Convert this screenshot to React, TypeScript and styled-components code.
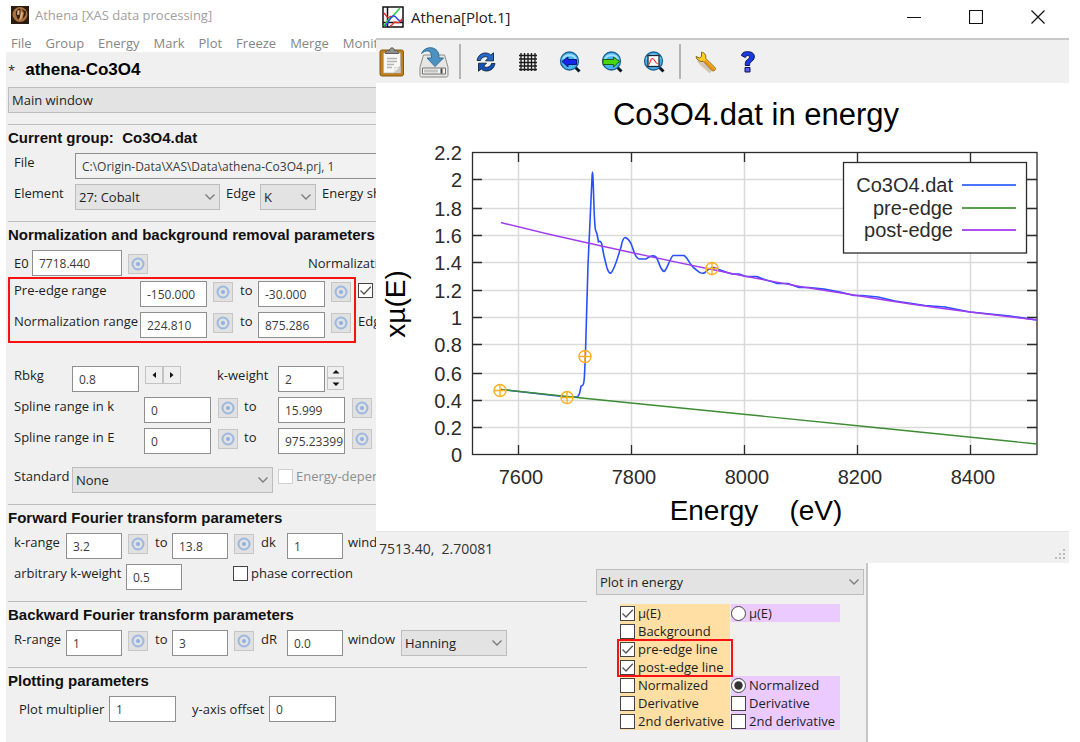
import React from "react";
import styled, { createGlobalStyle, css } from "styled-components";

const GlobalStyle = createGlobalStyle`
  *, *::before, *::after { box-sizing: border-box; }
  body {
    margin: 0;
    background: #ffffff;
    color: #1e1e1e;
    font-family: "Open Sans", "Noto Sans", sans-serif;
    font-size: 13px;
    line-height: 18px;
  }
  input, select, button { font: inherit; color: inherit; margin: 0; }
`;

/* ---------- shared form parts ---------- */

const Label = styled.label`
  white-space: nowrap;
  line-height: 18px;
`;

const Field = styled.input<{ $w?: number }>`
  width: ${(p) => (p.$w ? `${p.$w}px` : "100%")};
  height: 26px;
  padding: 0 0 0 6px;
  border: 1px solid #8f8f8f;
  border-radius: 0;
  background: #ffffff;
  color: #3c3c3c;
  font-size: 12px;
  outline: none;
  &:read-only { background: #f2f2f2; }
`;

const SelectBox = styled.span<{ $w?: number }>`
  display: grid;
  width: ${(p) => (p.$w ? `${p.$w}px` : "100%")};
  align-items: center;
  & > * { grid-area: 1 / 1; }
  & > svg { justify-self: end; margin-right: 4px; pointer-events: none; }
`;

const NativeSelect = styled.select`
  appearance: none;
  width: 100%;
  height: 26px;
  padding: 0 20px 0 3px;
  border: 1px solid #bdbdbd;
  border-radius: 0;
  background: #e3e3e3;
  outline: none;
`;

type SelectProps = { id: string; w?: number; options: string[]; label?: string };

function Select({ id, w, options, label }: SelectProps) {
  return (
    <SelectBox $w={w}>
      <NativeSelect id={id} aria-label={label} defaultValue={options[0]}>
        {options.map((o) => (
          <option key={o}>{o}</option>
        ))}
      </NativeSelect>
      <svg width="12" height="8" viewBox="0 0 12 8" fill="none" stroke="#7c7c7c" strokeWidth="1.4">
        <path d="M1.5 1.5 6 6l4.500-4.500" />
      </svg>
    </SelectBox>
  );
}

const CheckLabel = styled.label<{ $muted?: boolean }>`
  display: flex;
  align-items: center;
  gap: 3px;
  height: 18px;
  white-space: nowrap;
  color: ${(p) => (p.$muted ? "#8f8f8f" : "inherit")};
`;

const CheckSlot = styled.span`
  display: grid;
  & > * { grid-area: 1 / 1; }
  & > svg { visibility: hidden; pointer-events: none; }
  & > input:checked + svg { visibility: visible; }
`;

const CheckInput = styled.input<{ $muted?: boolean }>`
  appearance: none;
  width: 15px;
  height: 15px;
  background: #ffffff;
  border: 1px solid ${(p) => (p.$muted ? "#d0d0d0" : "#444444")};
  border-radius: ${(p) => (p.type === "radio" ? "50%" : "0")};
`;

type CheckProps = { text?: string; checked?: boolean; radio?: boolean; muted?: boolean; label?: string };

function Check({ text, checked, radio, muted, label }: CheckProps) {
  return (
    <CheckLabel $muted={muted}>
      <CheckSlot>
        <CheckInput
          type={radio ? "radio" : "checkbox"}
          name={radio ? "plot-single" : undefined}
          defaultChecked={checked}
          disabled={muted}
          $muted={muted}
          aria-label={label}
        />
        <svg width="15" height="15" viewBox="0 0 15 15">
          {radio ? (
            <circle cx="7.5" cy="7.5" r="4.200" fill="#333333" />
          ) : (
            <path d="M2.500 7.500 6 11l6.800-7.200" fill="none" stroke="#555555" strokeWidth="1.300" />
          )}
        </svg>
      </CheckSlot>
      {text}
    </CheckLabel>
  );
}

const TargetButton = styled.button`
  display: flex;
  align-items: center;
  justify-content: center;
  width: 20px;
  height: 20px;
  margin-top: 1px;
  padding: 0;
  border: 1px solid #c6c6c6;
  background: #e1e1e1;
`;

function Target({ name }: { name: string }) {
  return (
    <TargetButton type="button" aria-label={`Pluck ${name}`}>
      <svg width="14" height="14" viewBox="0 0 14 14" fill="none">
        <circle cx="7" cy="7" r="5.500" stroke="#9db8e0" strokeWidth="2" />
        <circle cx="7" cy="7" r="2" fill="#8fb0e2" />
      </svg>
    </TargetButton>
  );
}

/* ---------- main window ---------- */

const Desktop = styled.div`
  position: relative;
  min-height: 100vh;
`;

const MainWindow = styled.main`
  display: flex;
  flex-direction: column;
  width: calc(100% - 212px);
  min-height: 100vh;
`;

const MainTitle = styled.header`
  display: flex;
  align-items: center;
  gap: 6px;
  height: 29px;
  padding-left: 11px;
  color: #a0a0a0;
`;

const MenuBar = styled.nav`
  display: flex;
  align-items: center;
  gap: 14px;
  height: 23px;
  padding: 4px 0 0 11px;
`;

const MenuItem = styled.button`
  padding: 0;
  border: 0;
  background: none;
  color: #858585;
`;

const Panel = styled.div`
  display: grid;
  flex: 1;
  grid-template-columns: minmax(0, 1fr) 268px;
  column-gap: 9px;
  margin-left: 6px;
  padding: 0 2px 20px;
  background: #f0f0f0;
  border-right: 2px solid #c6c6c6;
`;

const Parameters = styled.div`
  display: flex;
  flex-direction: column;
`;

const ProjectRow = styled.div`
  display: flex;
  align-items: center;
  gap: 10px;
  height: 35px;
`;

const ProjectName = styled.h1`
  margin: 0;
  color: #000000;
  font: bold 17px/20px "Liberation Sans", sans-serif;
`;

const Section = styled.section`
  padding-bottom: 11px;
  border-top: 1px solid #bdbdbd;
  ${ProjectRow} + * + & { margin-top: 11px; }
`;

const Heading = styled.h2`
  margin: 4px 0 6px;
  color: #111111;
  font: bold 15px/18px "Liberation Sans", sans-serif;
  white-space: pre;
`;

const Row = styled.div<{ $cols: string; $top?: number; $center?: boolean; $inset?: number }>`
  display: grid;
  grid-template-columns: ${(p) => p.$cols};
  align-items: ${(p) => (p.$center ? "center" : "start")};
  min-height: 26px;
  margin-top: ${(p) => p.$top ?? 5}px;
  padding-left: ${(p) => p.$inset ?? 6}px;
`;

const RangeGroup = styled.div`
  display: flex;
  gap: 2px;
  margin-top: 1px;
`;

const redFrame = css`border: 2px solid #fa1212;`;

const RangeFrame = styled.div`
  display: grid;
  gap: 5px;
  padding: 2px 0 3px;
  ${redFrame}
`;

const RangeSide = styled.div`
  display: grid;
  align-content: start;
  gap: 13px;
  padding-top: 4px;
`;

const StepPair = styled.span<{ $vertical?: boolean }>`
  display: flex;
  flex-direction: ${(p) => (p.$vertical ? "column" : "row")};
`;

const StepButton = styled.button<{ $vertical?: boolean }>`
  display: flex;
  align-items: center;
  justify-content: center;
  width: ${(p) => (p.$vertical ? 17 : 18)}px;
  height: ${(p) => (p.$vertical ? 12 : 18)}px;
  padding: 0;
  border: 1px solid #c3c3c3;
  background: #efefef;
`;

const arrows = {
  left: "M6 1v6L2.500 4z",
  right: "M2 1v6l3.500-3z",
  up: "M4 2l3.500 3.500h-7z",
  down: "M4 6 .5 2.500h7z",
};

function Step({ dir, vertical }: { dir: keyof typeof arrows; vertical?: boolean }) {
  return (
    <StepButton type="button" $vertical={vertical} aria-label={`Step ${dir}`}>
      <svg width="8" height="8" viewBox="0 0 8 8" fill="#111111">
        <path d={arrows[dir]} />
      </svg>
    </StepButton>
  );
}

type RangeProps = { id: string; label: string; from: string; to: string; cols: string; inset?: number; top?: number };

function RangeRow({ id, label, from, to, cols, inset, top }: RangeProps) {
  return (
    <Row $cols={cols} $inset={inset} $top={top}>
      <Label htmlFor={`${id}-from`}>{label}</Label>
      <Field id={`${id}-from`} $w={67} defaultValue={from} />
      <Target name={`${label} start`} />
      <Label htmlFor={`${id}-to`}>to</Label>
      <Field id={`${id}-to`} $w={67} defaultValue={to} />
      <Target name={`${label} end`} />
    </Row>
  );
}

type FourierProps = {
  id: string;
  label: string;
  from: string;
  to: string;
  step: string;
  stepValue: string;
  windowLabel: string;
};

function FourierRow({ id, label, from, to, step, stepValue, windowLabel }: FourierProps) {
  return (
    <Row $cols="52px 62px 27px 17px 62px 27px 26px 61px 53px auto">
      <Label htmlFor={`${id}-from`}>{label}</Label>
      <Field id={`${id}-from`} $w={56} defaultValue={from} />
      <Target name={`${label} start`} />
      <Label htmlFor={`${id}-to`}>to</Label>
      <Field id={`${id}-to`} $w={56} defaultValue={to} />
      <Target name={`${label} end`} />
      <Label htmlFor={`${id}-step`}>{step}</Label>
      <Field id={`${id}-step`} $w={56} defaultValue={stepValue} />
      <Label htmlFor={`${id}-window`}>{windowLabel}</Label>
      <Select id={`${id}-window`} w={106} options={["Hanning"]} />
    </Row>
  );
}

/* ---------- plot options ---------- */

const PlotOptions = styled.aside`
  padding-top: 517px;
`;

const OptionColumns = styled.div`
  display: grid;
  grid-template-columns: 110px 109px;
  column-gap: 1px;
  margin: 9px 0 0 24px;
`;

const OptionList = styled.div<{ $tone: string }>`
  display: grid;
  grid-auto-rows: 18px;
  & > * { background: ${(p) => p.$tone}; }
`;

const Spacer = styled.div`
  && { background: none; }
  grid-row: span 3;
`;

const FramedOptions = styled.div`
  position: relative;
  grid-row: span 2;
  &::after {
    content: "";
    position: absolute;
    inset: -1px -3px;
    z-index: 1;
    pointer-events: none;
    ${redFrame}
  }
`;

/* ---------- plot window ---------- */

const PlotWindow = styled.section`
  position: absolute;
  top: 0;
  left: 376px;
  right: 11px;
  background: #ffffff;
`;

const PlotTitle = styled.header`
  display: flex;
  align-items: center;
  height: 38px;
  padding: 0 18px 4px 6px;
`;

const PlotName = styled.h2`
  flex: 1;
  margin: 0 0 0 7px;
  color: #222222;
  font-size: 15px;
  font-weight: 400;
  line-height: 20px;
`;

const WindowButton = styled.button`
  display: flex;
  align-items: center;
  justify-content: center;
  width: 62px;
  height: 26px;
  padding: 0;
  border: 0;
  background: none;
  &:last-child { width: 26px; margin-left: 18px; }
`;

const ToolBar = styled.div`
  display: flex;
  align-items: center;
  gap: 10px;
  height: 45px;
  border-top: 2px solid #c9c9c9;
  background: #f0f0f0;
`;

const ToolButton = styled.button`
  display: flex;
  align-items: center;
  justify-content: center;
  width: 32px;
  height: 34px;
  padding: 0;
  border: 0;
  background: none;
`;

const ToolDivider = styled.span`
  width: 2px;
  height: 35px;
  margin: 0 -1px;
  background: #b4b4b4;
`;

const Chart = styled.svg`
  display: block;
  width: 100%;
  height: 448px;
  font-family: "Liberation Sans", sans-serif;
`;

const StatusBar = styled.footer`
  display: flex;
  align-items: center;
  justify-content: space-between;
  height: 32px;
  padding: 3px 3px 0;
  border-top: 1px solid #e4e4e4;
  background: #f0f0f0;
  color: #333333;
  font-size: 14px;
  white-space: pre;
  & > svg { align-self: flex-end; }
`;

const outline = "#10243c";

function Lens({ children }: { children: React.ReactNode }) {
  return (
    <svg width="22" height="22" viewBox="0 0 22 22">
      <path d="m16 16 4.500 4.500" stroke="#0b1826" strokeWidth="3" />
      <circle cx="10.500" cy="10" r="9" fill="#48b4f0" stroke="#1d5f93" strokeWidth="1.300" />
      <path d="M4 8a7 6 0 0 1 13 0" fill="none" stroke="#a8e0ff" strokeWidth="2" />
      {children}
    </svg>
  );
}

const tools: Record<string, React.ReactNode> = {
  Copy: (
    <svg width="26" height="30" viewBox="0 0 26 30">
      <rect x="1" y="3" width="23.500" height="26" rx="2" fill="#c07f1c" stroke="#8a5a10" />
      <path d="M4.500 6h17v20h-17z" fill="#f7f7f5" stroke="#a9a9a0" strokeWidth=".6" />
      <path d="M21.500 19v7h-6z" fill="#c9c9c4" />
      <path d="M15.500 26c1-2 .6-4 0-5.500 2 .8 4.500.5 6-1.500z" fill="#ffffff" stroke="#b5b5b0" strokeWidth=".6" />
      <path d="M6.500 6.500c0-3 2-3 4-3 0-3.500 5-3.500 5 0 2 0 4 0 4 3z" fill="#8e908b" stroke="#5c5e5a" />
      <path d="M8 11.500h10M8 14.500h10M8 17.500h7M8 20.500h5" stroke="#b4b4b4" strokeWidth="1.300" />
    </svg>
  ),
  Save: (
    <svg width="30" height="32" viewBox="0 0 30 32">
      <path d="M4.500 9h21L29 21v8.500c0 .8-.6 1.500-1.500 1.500h-25C1.600 31 1 30.300 1 29.500V21z" fill="#e6e6e4" stroke="#8b8d88" />
      <path d="M3.500 22h23v6h-23z" fill="#f5f5f5" stroke="#70726e" />
      <path d="M5 25h14" stroke="#c4c4c4" strokeWidth="3" />
      <path d="M22.500 22.500v5" stroke="#444444" strokeWidth="2" />
      <path d="M2.500 7.500C5 1.500 12 .5 16 3c3.500 2 4 5 4 9h4.500L16 20.500 8 12h4.500c0-4-.8-6.500-3.500-7-2.500-.4-4.500.8-6.500 2.500z" fill="#4b92c0" stroke="#336f99" />
    </svg>
  ),
  Replot: (
    <svg width="20" height="20" viewBox="0 0 20 20" stroke={outline} strokeWidth=".9">
      <path d="M1 8.500C2 3.500 5.500 1 9.500 1c2.400 0 4 .8 5.200 2L17.500.8v8h-8L12.300 6C11 4.800 9.800 4.500 8.500 4.800 6.500 5.200 5 6.500 4.500 8.500z" fill="#2468c8" />
      <path d="M19 11.500c-1 5-4.500 7.500-8.500 7.500-2.400 0-4-.8-5.200-2l-2.800 2.200v-8h8L7.700 14c1.300 1.200 2.500 1.500 3.800 1.200 2-.4 3.500-1.700 4-3.700z" fill="#1550b4" />
    </svg>
  ),
  Grid: (
    <svg width="20" height="20" viewBox="0 0 20 20" stroke="#1a1a1a" strokeWidth="1.300">
      <path d="M3 1v18M6.500 1v18M10 1v18M13.500 1v18M17 1v18M1 3.500h18M1 7h18M1 10.500h18M1 14h18M1 17.500h18" />
    </svg>
  ),
  "Previous zoom": (
    <Lens>
      <path d="M3 10.500 9 6v2.500h8.500v5H9V16z" fill="#1626e8" stroke="#061070" strokeWidth=".9" />
    </Lens>
  ),
  "Next zoom": (
    <Lens>
      <path d="M18.500 10.500 12.500 6v2.500H2v5h10.500V16z" fill="#49d414" stroke="#175408" strokeWidth=".9" />
    </Lens>
  ),
  Autoscale: (
    <Lens>
      <rect x="5" y="4.500" width="11" height="11" fill="#ffffff" stroke="#20242c" strokeWidth="1.300" />
      <path d="M6 13.500C7.500 11 7.500 7.500 9.500 7.500s2.500 5 5.500 5.500" fill="none" stroke="#f03030" strokeWidth="1.200" />
    </Lens>
  ),
  Configure: (
    <svg width="22" height="22" viewBox="0 0 22 22">
      <path d="M4 9c2 4 8 8 12 12" stroke="#d2c7b4" strokeWidth="4" fill="none" />
      <path d="M1 5.500 4.500 7 6.500 5.500V1.200C9.800 1.700 11.400 4.200 10.600 7.400l9.300 9c1.800 2.200-1.200 4.600-3.200 2.800L8 10.200C5 11 2 9.500 1 5.500z" fill="#f9cf20" stroke="#7a5410" strokeWidth=".9" />
      <path d="m10.500 10.500 7.500 7.300" stroke="#f08a1c" strokeWidth="2.400" strokeLinecap="round" />
    </svg>
  ),
  Help: (
    <svg width="16" height="22" viewBox="0 0 16 22" stroke="#0a1050" strokeWidth="1">
      <path d="M1.500 4.500C2 .8 6 .5 8.500.7c3.500.2 6 2 5.800 5.300-.2 3-2.300 4-3.800 5.500-.8.8-.9 1.500-.9 3H5.300c-.2-2.500.2-4.200 2-5.800C8.600 7.500 9.700 7 9.500 5.700 9.200 4 6 4 5.300 6.500z" fill="#1b3be0" />
      <path d="M5 16.500h5v4.500H5z" fill="#5a5ff0" />
    </svg>
  ),
};

function Tool({ name }: { name: string }) {
  return (
    <ToolButton type="button" aria-label={name}>
      {tools[name]}
    </ToolButton>
  );
}

const yTicks: [string, number][] = [
  ["2.2", 152], ["2", 179], ["1.8", 208], ["1.6", 235], ["1.4", 262], ["1.2", 290],
  ["1", 317], ["0.8", 344], ["0.6", 373], ["0.4", 400], ["0.2", 427], ["0", 454],
];
const xTicks: [string, number][] = [["7600", 518], ["7800", 631], ["8000", 744], ["8200", 857], ["8400", 970]];
const legend: [string, number, string][] = [["Co3O4.dat", 185, "#4a74ff"], ["pre-edge", 208, "#5c9e50"], ["post-edge", 230, "#b050f0"]];
const markers: [number, number][] = [[500, 390], [567, 397], [585, 356], [712, 268]];

function EnergyPlot() {
  const innerX = xTicks.map(([, x]) => x);
  const innerY = yTicks.slice(1, -1).map(([, y]) => y);
  return (
    <Chart viewBox="376 83 693 448" role="img" aria-label="Co3O4.dat in energy">
      <g stroke="#dadada" strokeWidth="1.500">
        {innerX.map((x) => <path key={x} d={`M${x + 0.5} 152V454`} />)}
        {innerY.map((y) => <path key={y} d={`M472 ${y + 0.5}H1037`} />)}
      </g>
      <g stroke="#2c2c2c" strokeWidth="1.300" fill="none">
        {innerX.map((x) => <path key={x} d={`M${x + 0.5} 152v10M${x + 0.5} 454v-9`} />)}
        {innerY.map((y) => <path key={y} d={`M472 ${y + 0.5}h10M1037 ${y + 0.5}h-10`} />)}
        <rect x="472.500" y="152.500" width="564.500" height="302" />
      </g>
      <g fill="none" strokeWidth="1.600" strokeLinejoin="round">
        <path
          stroke="#2850ff"
          d="M501 389.500 567 397H577C580 396 580 391 581 386C583 386 584 385 584.500 375L585.500 352L588 265L592 178Q592.500 166 593 178C594 200 594 222 595.500 230L597 234L598.500 242Q600 240 601.500 243L604 256L607 268Q609 274 611 273C615 269 618 256 621 247Q623 237 625.500 237.500C629 239 631 242 633 249C635 256 637 259 640 259H646Q652 254 656 257C659 261 660 270 664 271.500C667 270 670 258 673 255.500H684C688 258 690 265 694 268C698 271 701 275 705 272.500Q709 268 714 267.500C720 270 726 272.500 732 274H739L746 276.500H757C763 279.500 770 281 777 283.500H788L799 287.500H809L824 289L840 292L854 295.500H862L878 297L895 301L925 305.500L945 307L970 312L1010 316L1037 320"
        />
        <path stroke="#3c8c32" strokeWidth="1.400" d="M501 389.500 567 396.500 631 403 736 413.500 870 427 1037 444" />
        <path stroke="#a03cf0" strokeWidth="1.400" d="M501 222.500C530 230 560 237 588 243C615 249 660 259 712 269.500L744 276L800 286.500L857 295.500C895 302 930 307 970 312L1037 320" />
      </g>
      <g fill="none" stroke="#ffb01e" strokeWidth="1.400">
        {markers.map(([x, y]) => (
          <path key={x} d={`M${x - 6} ${y + 0.5}a6 6 0 1 0 12 0a6 6 0 1 0 -12 0h12M${x} ${y - 5.5}v12`} />
        ))}
      </g>
      <rect x="843.500" y="162.500" width="183" height="90.500" fill="#ffffff" stroke="#2c2c2c" strokeWidth="1.300" />
      <g fill="#2c2c2c" fontSize="20" textAnchor="end">
        {legend.map(([text, y]) => <text key={text} x="953" y={y + 7}>{text}</text>)}
        {yTicks.map(([text, y]) => <text key={text} x="462" y={y + 8}>{text}</text>)}
      </g>
      {legend.map(([text, y, color]) => <path key={text} d={`M962 ${y}h54`} stroke={color} strokeWidth="2" />)}
      <g fill="#2c2c2c" fontSize="20" textAnchor="middle">
        {xTicks.map(([text, x]) => <text key={text} x={x + 3} y="484">{text}</text>)}
      </g>
      <g fill="#000000" textAnchor="middle">
        <text x="756" y="125" fontSize="31">Co3O4.dat in energy</text>
        <text x="756" y="520" fontSize="28" xmlSpace="preserve" style={{ whiteSpace: "pre" }}>{"Energy    (eV)"}</text>
        <text fontSize="28" transform="translate(405 304) rotate(-90)">xµ(E)</text>
      </g>
    </Chart>
  );
}

export default function App() {
  return (
    <Desktop>
      <GlobalStyle />
      <MainWindow>
        <MainTitle>
          <svg width="18" height="18" viewBox="0 0 18 18">
            <path fill="#2a1c12" d="M0 0h18v18H0z" />
            <circle cx="9" cy="8.500" r="7.500" fill="#a9713c" />
            <path d="M9 2.500c-3 .5-4.500 3-4 6.500l2 4.500 2-1 .5-9zM11 3l2 4-1.500 6 3-3.500.5-4z" fill="#332117" />
            <path d="M6.500 4.500 8.500 4v4.500L6 9zM10.500 5.500l1.500 2-1.500 5-2.500 2z" fill="#e2b57c" />
          </svg>
          Athena [XAS data processing]
        </MainTitle>
        <MenuBar>
          {["File", "Group", "Energy", "Mark", "Plot", "Freeze", "Merge", "Monitor"].map((m) => (
            <MenuItem type="button" key={m}>{m}</MenuItem>
          ))}
        </MenuBar>
        <Panel>
          <Parameters>
            <ProjectRow>
              <span>*</span>
              <ProjectName>athena-Co3O4</ProjectName>
            </ProjectRow>
            <Select id="view" label="View" options={["Main window"]} />
            <Section>
              <Heading>{"Current group:  Co3O4.dat"}</Heading>
              <Row $cols="61px 1fr">
                <Label htmlFor="file">File</Label>
                <Field id="file" readOnly defaultValue="C:\Origin-Data\XAS\Data\athena-Co3O4.prj, 1" />
              </Row>
              <Row $cols="61px 151px 34px 62px auto">
                <Label htmlFor="element">Element</Label>
                <Select id="element" w={145} options={["27: Cobalt"]} />
                <Label htmlFor="edge">Edge</Label>
                <Select id="edge" w={56} options={["K"]} />
                <Label as="span">Energy shift</Label>
              </Row>
            </Section>
            <Section>
              <Heading>Normalization and background removal parameters</Heading>
              <Row $cols="18px 96px 180px auto" $center>
                <Label htmlFor="e0">E0</Label>
                <Field id="e0" $w={90} defaultValue="7718.440" />
                <Target name="E0" />
                <Label as="span">Normalization order</Label>
              </Row>
              <RangeGroup>
                <RangeFrame>
                  <RangeRow id="pre" label="Pre-edge range" from="-150.000" to="-30.000" cols="126px 73px 27px 18px 73px 23px" inset={4} top={0} />
                  <RangeRow id="norm" label="Normalization range" from="224.810" to="875.286" cols="126px 73px 27px 18px 73px 23px" inset={4} top={0} />
                </RangeFrame>
                <RangeSide>
                  <Check checked label="Flatten normalized data" />
                  <Label as="span">Edge step</Label>
                </RangeSide>
              </RangeGroup>
              <Row $cols="58px 73px 72px 61px 49px auto" $top={23}>
                <Label htmlFor="rbkg">Rbkg</Label>
                <Field id="rbkg" $w={67} defaultValue="0.8" />
                <StepPair>
                  <Step dir="left" />
                  <Step dir="right" />
                </StepPair>
                <Label htmlFor="kweight">k-weight</Label>
                <Field id="kweight" $w={47} defaultValue="2" />
                <StepPair $vertical>
                  <Step dir="up" vertical />
                  <Step dir="down" vertical />
                </StepPair>
              </Row>
              <RangeRow id="spline-k" label="Spline range in k" from="0" to="15.999" cols="130px 74px 26px 34px 74px auto" />
              <RangeRow id="spline-e" label="Spline range in E" from="0" to="975.23399" cols="130px 74px 26px 34px 74px auto" />
              <Row $cols="58px 206px auto" $top={13}>
                <Label htmlFor="standard">Standard</Label>
                <Select id="standard" w={201} options={["None"]} />
                <Check muted text="Energy-dependent normalization" />
              </Row>
            </Section>
            <Section>
              <Heading>Forward Fourier transform parameters</Heading>
              <FourierRow id="k" label="k-range" from="3.2" to="13.8" step="dk" stepValue="1" windowLabel="wind" />
              <Row $cols="112px 107px auto">
                <Label htmlFor="arbitrary">arbitrary k-weight</Label>
                <Field id="arbitrary" $w={56} defaultValue="0.5" />
                <Check text="phase correction" />
              </Row>
            </Section>
            <Section>
              <Heading>Backward Fourier transform parameters</Heading>
              <FourierRow id="r" label="R-range" from="1" to="3" step="dR" stepValue="0.0" windowLabel="window" />
            </Section>
            <Section>
              <Heading>Plotting parameters</Heading>
              <Row $cols="90px 83px 77px auto" $inset={11} $center>
                <Label htmlFor="multiplier">Plot multiplier</Label>
                <Field id="multiplier" $w={67} defaultValue="1" />
                <Label htmlFor="offset">y-axis offset</Label>
                <Field id="offset" $w={67} defaultValue="0" />
              </Row>
            </Section>
          </Parameters>
          <PlotOptions>
            <Select id="plot-space" label="Plot space" options={["Plot in energy"]} />
            <OptionColumns>
              <OptionList $tone="#ffdfa3">
                <Check text="µ(E)" checked />
                <Check text="Background" />
                <FramedOptions>
                  <Check text="pre-edge line" checked />
                  <Check text="post-edge line" checked />
                </FramedOptions>
                <Check text="Normalized" />
                <Check text="Derivative" />
                <Check text="2nd derivative" />
              </OptionList>
              <OptionList $tone="#ebcbff">
                <Check text="µ(E)" radio />
                <Spacer />
                <Check text="Normalized" radio checked />
                <Check text="Derivative" />
                <Check text="2nd derivative" />
              </OptionList>
            </OptionColumns>
          </PlotOptions>
        </Panel>
      </MainWindow>

      <PlotWindow>
        <PlotTitle>
          <svg width="22" height="22" viewBox="0 0 22 22" fill="none">
            <rect x="1" y="1" width="20" height="20" fill="#ffffff" stroke="#111111" strokeWidth="1.500" />
            <path d="M5.500 1v20M1 16.500h20" stroke="#111111" strokeWidth="1.500" />
            <path d="M2 7l4 5 3-2" stroke="#e02828" strokeWidth="1.300" />
            <path d="M2 20 7 13C12 11 12 8 18 2" stroke="#28d048" strokeWidth="1.600" />
            <path d="M3 20c5-4 5-11 9-10s2 5 8 5" stroke="#3048f0" strokeWidth="1.500" />
            <path d="M8 20c3 0 3-4 5-4s3 3 7-3" stroke="#f03030" strokeWidth="1.400" />
          </svg>
          <PlotName>Athena[Plot.1]</PlotName>
          <WindowButton type="button" aria-label="Minimize">
            <svg width="14" height="14" viewBox="0 0 14 14"><path d="M0 7.500h14" stroke="#111111" /></svg>
          </WindowButton>
          <WindowButton type="button" aria-label="Maximize">
            <svg width="14" height="14" viewBox="0 0 14 14"><path d="M.5.5h13v13H.5z" fill="none" stroke="#111111" strokeWidth="1.200" /></svg>
          </WindowButton>
          <WindowButton type="button" aria-label="Close">
            <svg width="14" height="14" viewBox="0 0 14 14"><path d="m.5.500 13 13m0-13-13 13" stroke="#111111" strokeWidth="1.200" /></svg>
          </WindowButton>
        </PlotTitle>
        <ToolBar>
          <Tool name="Copy" />
          <Tool name="Save" />
          <ToolDivider />
          <Tool name="Replot" />
          <Tool name="Grid" />
          <Tool name="Previous zoom" />
          <Tool name="Next zoom" />
          <Tool name="Autoscale" />
          <ToolDivider />
          <Tool name="Configure" />
          <Tool name="Help" />
        </ToolBar>
        <EnergyPlot />
        <StatusBar>
          {"7513.40,  2.70081"}
          <svg width="12" height="14" viewBox="0 0 12 14" fill="#bcbcbc">
            <path d="M9 0h2v2H9zM5 4h2v2H5zM9 4h2v2H9zM1 8h2v2H1zM5 8h2v2H5zM9 8h2v2H9z" />
          </svg>
        </StatusBar>
      </PlotWindow>
    </Desktop>
  );
}
